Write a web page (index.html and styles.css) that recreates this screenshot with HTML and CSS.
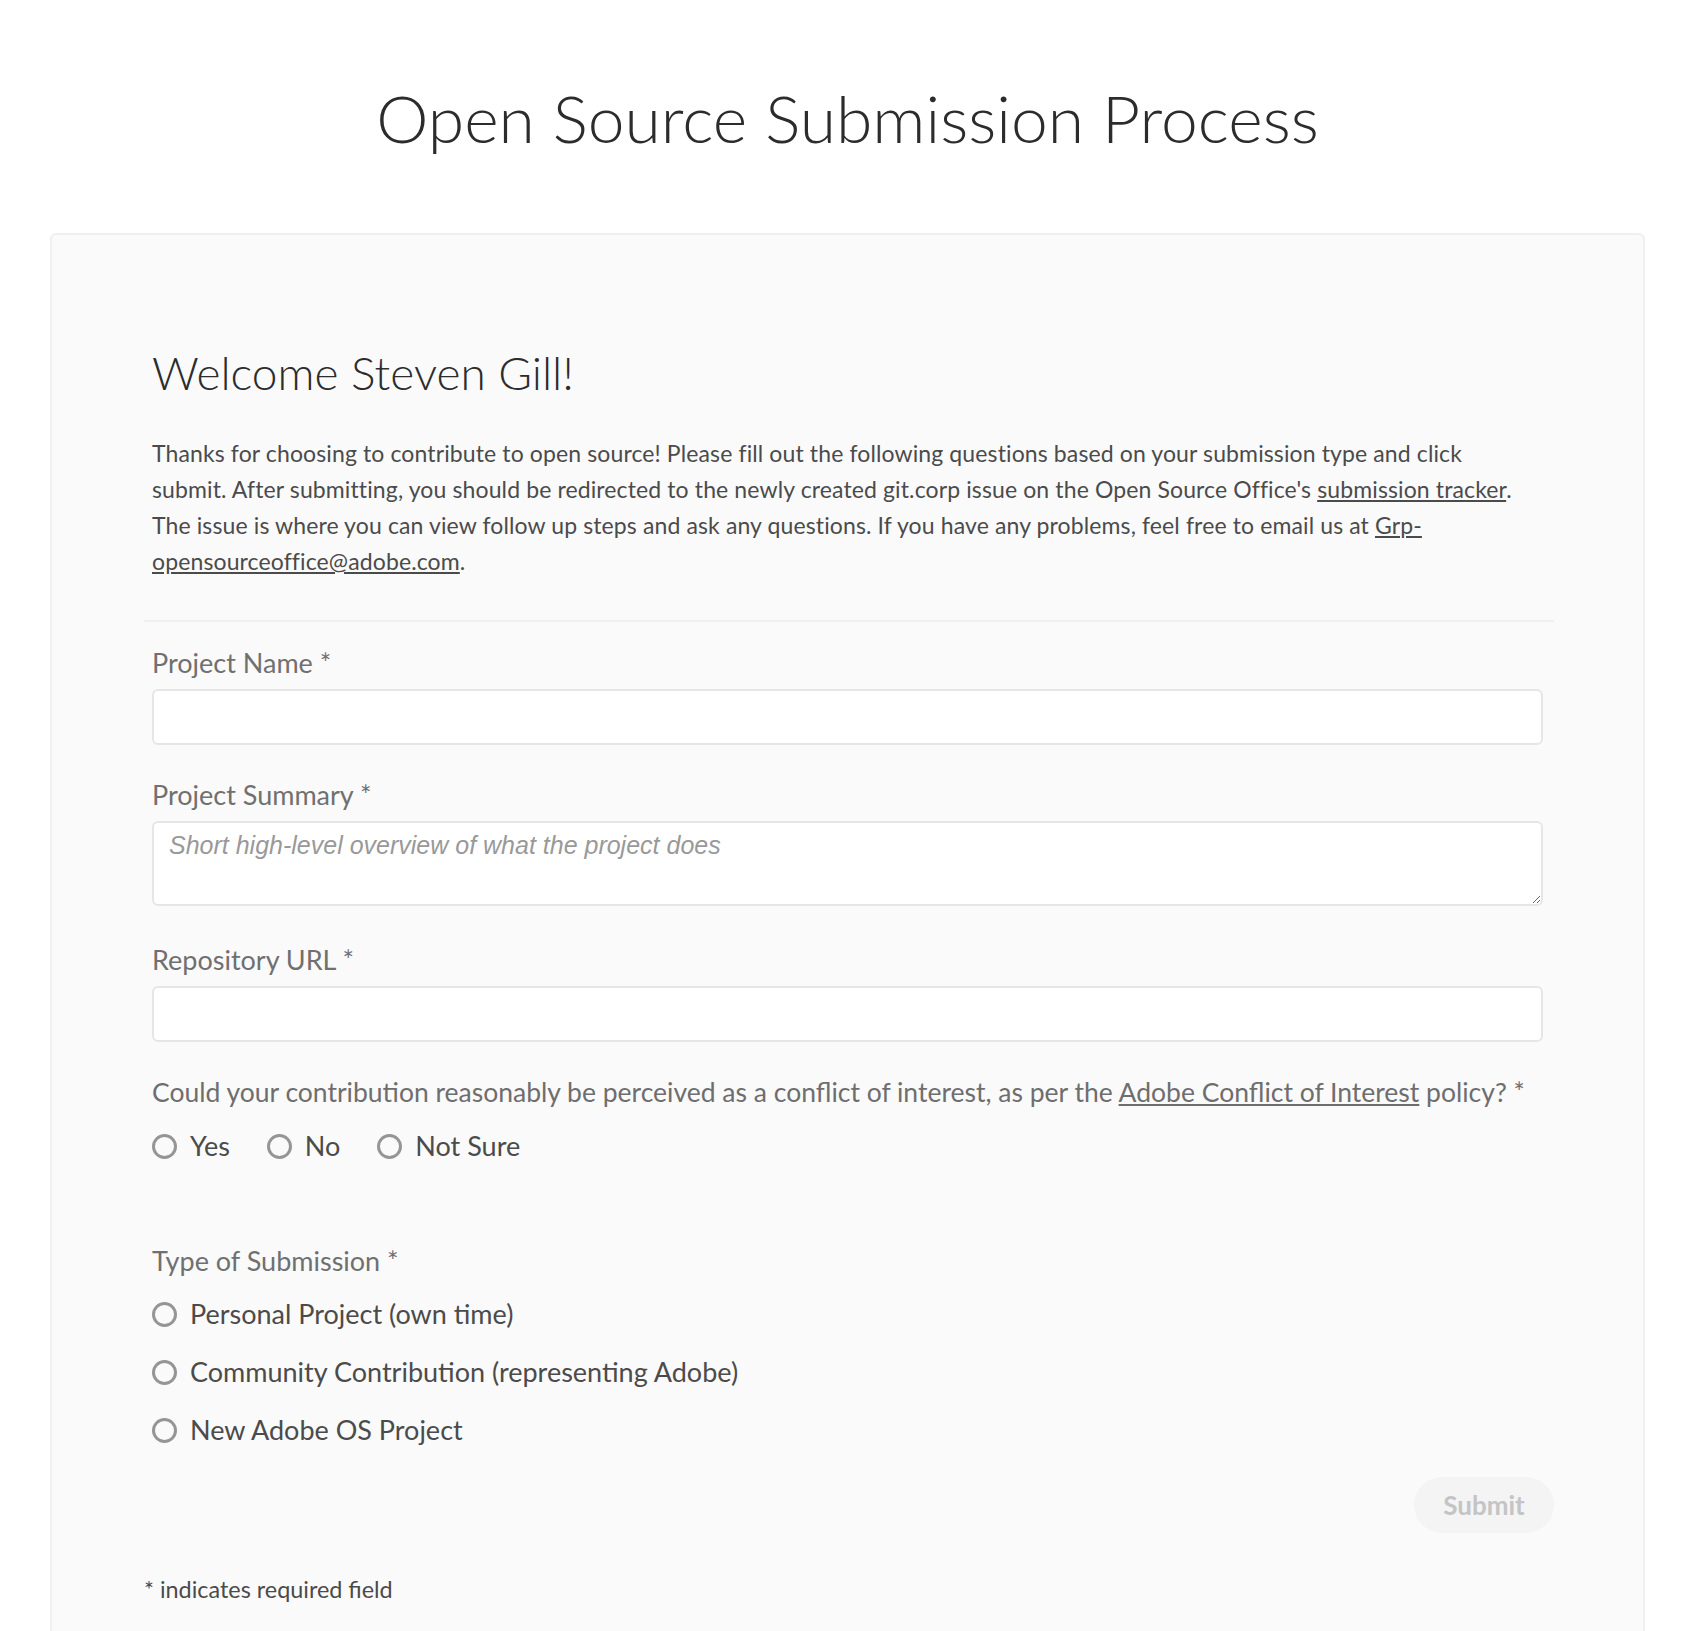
FILE: index.html
```html
<!DOCTYPE html>
<html lang="en">
<head>
<meta charset="utf-8">
<title>Open Source Submission Process</title>
<link rel="stylesheet" href="styles.css">
</head>
<body>
<div class="page">
  <h1 class="title">Open Source Submission Process</h1>
  <main class="card">
    <section class="intro">
      <h2 class="welcome">Welcome Steven Gill!</h2>
      <p class="lead">Thanks for choosing to contribute to open source! Please fill out the following questions based on your submission type and click submit. After submitting, you should be redirected to the newly created git.corp issue on the Open Source Office's <a href="#">submission tracker</a>. The issue is where you can view follow up steps and ask any questions. If you have any problems, feel free to email us at <a href="#">Grp-opensourceoffice@adobe.com</a>.</p>
    </section>
    <hr class="sep">
    <form class="form">
      <div class="field">
        <label class="label" for="pname">Project Name *</label>
        <input class="input" id="pname" type="text">
      </div>
      <div class="field field-area">
        <label class="label" for="psum">Project Summary *</label>
        <textarea class="textarea" id="psum" placeholder="Short high-level overview of what the project does"></textarea>
      </div>
      <div class="field">
        <label class="label" for="purl">Repository URL *</label>
        <input class="input" id="purl" type="text">
      </div>
      <div class="field field-coi">
        <p class="question">Could your contribution reasonably be perceived as a conflict of interest, as per the <a href="#">Adobe Conflict of Interest</a> policy? *</p>
        <div class="radio-row">
          <label class="radio"><input type="radio" name="coi"><span>Yes</span></label>
          <label class="radio"><input type="radio" name="coi"><span>No</span></label>
          <label class="radio"><input type="radio" name="coi"><span>Not Sure</span></label>
        </div>
      </div>
      <div class="field field-type">
        <p class="label">Type of Submission *</p>
        <div class="radio-col">
          <label class="radio"><input type="radio" name="type"><span>Personal Project (own time)</span></label>
          <label class="radio"><input type="radio" name="type"><span>Community Contribution (representing Adobe)</span></label>
          <label class="radio"><input type="radio" name="type"><span>New Adobe OS Project</span></label>
        </div>
      </div>
      <div class="actions">
        <button class="submit" type="button" disabled>Submit</button>
      </div>
      <p class="note">* indicates required field</p>
    </form>
  </main>
</div>
</body>
</html>
```
FILE: styles.css
```css
* { box-sizing: border-box; }
html, body { margin: 0; padding: 0; background: #ffffff; }
body { font-family: Lato, "Open Sans", sans-serif; color: #4b4b4b; }

.page {
  padding: 78px 60px 0 50px;
}

.title {
  margin: 0;
  text-align: center;
  font-size: 66px;
  line-height: 1.2;
  font-weight: 300;
  color: #2c2c2c;
}

.card {
  margin-top: 76px;
  background: #fafafa;
  border: 2px solid #f0f0f0;
  border-radius: 6px;
  padding: 109px 89px 120px 92px;
}

.intro { padding: 0 8px; }

.welcome {
  margin: 0;
  font-size: 46px;
  line-height: 58px;
  font-weight: 300;
  color: #2c2c2c;
}

.lead {
  max-width: 1372px;
  margin: 33px 0 0;
  font-size: 23px;
  letter-spacing: 0.12px;
  line-height: 36px;
  color: #4b4b4b;
}

.lead a, .question a { color: inherit; text-decoration: underline; }

.sep {
  margin: 41px 0 0;
  border: 0;
  height: 2px;
  background: #f0f0f0;
}

.form { padding-top: 25px; }

.field {
  padding: 0 11px 0 8px;
  margin-bottom: 34px;
}
.field-area { margin-bottom: 38px; }
.field-coi { margin-bottom: 83px; }

.label {
  display: block;
  margin: 0 0 10px;
  font-size: 27px;
  line-height: 32px;
  color: #707070;
}

.input, .textarea {
  display: block;
  width: 100%;
  background: #ffffff;
  border: 2px solid #e6e6e6;
  border-radius: 6px;
  font-family: "Liberation Sans", Arial, sans-serif;
  font-size: 25px;
  color: #4b4b4b;
  outline: none;
}
.input { height: 56px; padding: 0 15px; }
.textarea { height: 85px; padding: 8px 15px; resize: vertical; }
.textarea::placeholder { color: #999999; font-style: italic; }

.question {
  margin: 0 0 22px;
  font-size: 26.5px;
  line-height: 32px;
  color: #6e6e6e;
}

.radio-row { display: flex; align-items: center; }
.radio-row .radio { margin-right: 37px; }

.radio {
  display: flex;
  align-items: center;
  gap: 13px;
  font-size: 27px;
  line-height: 32px;
  color: #4b4b4b;
}

.radio input {
  appearance: none;
  -webkit-appearance: none;
  margin: 0;
  width: 25px;
  height: 25px;
  border: 3px solid #959595;
  border-radius: 50%;
  background: transparent;
  flex: none;
}

.field-type .label { margin-bottom: 21px; }
.radio-col { display: flex; flex-direction: column; gap: 26px; }

.field-type { margin-bottom: 31px; }

.actions { display: flex; justify-content: flex-end; }

.submit {
  width: 140px;
  height: 56px;
  border: 0;
  border-radius: 28px;
  background: #f4f4f4;
  color: #c4c4c4;
  font-family: Lato, "Open Sans", sans-serif;
  font-weight: 700;
  font-size: 26px;
}

.note {
  margin: 42px 0 0;
  font-size: 23.4px;
  line-height: 28px;
  color: #4b4b4b;
}
```
